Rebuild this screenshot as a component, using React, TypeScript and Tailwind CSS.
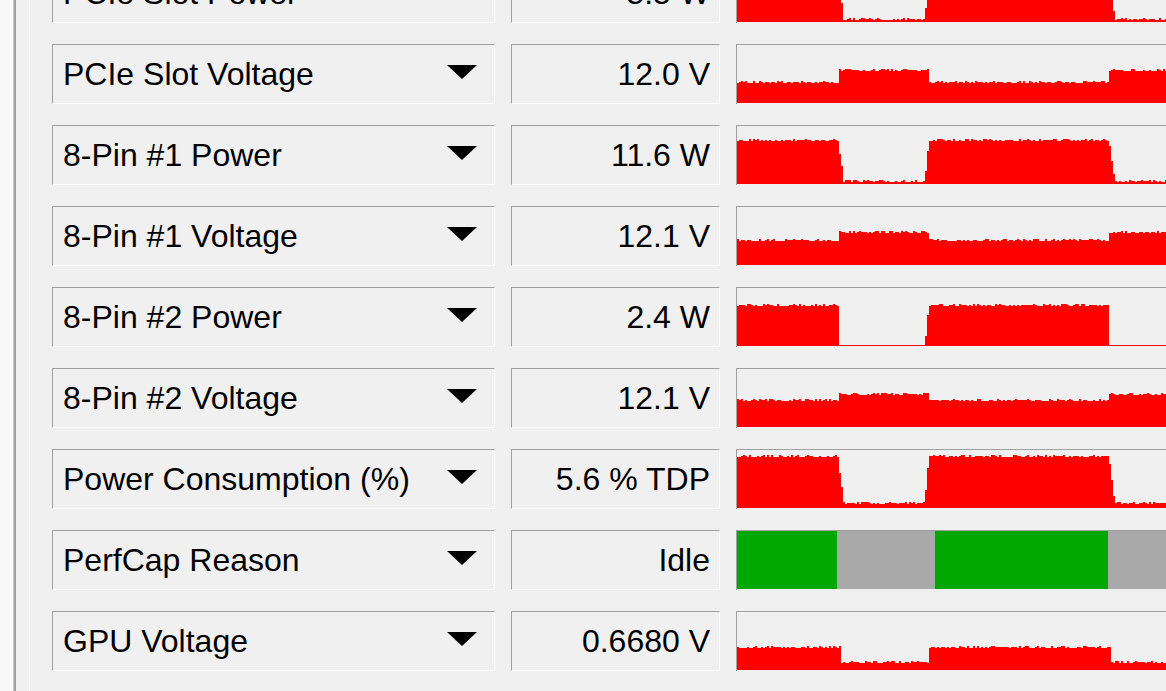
import React from "react";

type Key = [number, number];

interface SensorRow {
  label: string;
  value: string;
  keys?: Key[];
  perfcap?: boolean;
}

const GRAPH_W = 440;
const GRAPH_H = 58;

// deterministic noise so the picture is stable between runs
function noise(seed: number, i: number) {
  const s = Math.sin(seed * 97.13 + i * 12.9898) * 43758.5453;
  return s - Math.floor(s);
}

function levelAt(keys: Key[], x: number) {
  if (x <= keys[0][0]) return keys[0][1];
  for (let i = 1; i < keys.length; i++) {
    const [x0, y0] = keys[i - 1];
    const [x1, y1] = keys[i];
    if (x <= x1) {
      if (x1 === x0) return y1;
      return y0 + ((y1 - y0) * (x - x0)) / (x1 - x0);
    }
  }
  return keys[keys.length - 1][1];
}

function buildPath(keys: Key[], seed: number) {
  const pts: string[] = [`M0,${GRAPH_H}`];
  for (let x = 0; x <= GRAPH_W; x += 2) {
    const base = levelAt(keys, x);
    const n = noise(seed, x);
    const y = base < GRAPH_H - 2 ? base + (n > 0.6 ? 1 : n < 0.2 ? -1 : 0) : base;
    pts.push(`L${x},${y.toFixed(0)}`);
    pts.push(`L${x + 2},${y.toFixed(0)}`);
  }
  pts.push(`L${GRAPH_W},${GRAPH_H}Z`);
  return pts.join(" ");
}

// power style: high / low with a short slope on the way down
function powerKeys(hi: number, lo: number, slope = 6): Key[] {
  return [
    [0, hi],
    [100, hi],
    [100 + slope, lo],
    [187, lo],
    [191, hi],
    [371, hi],
    [371 + slope, lo],
    [GRAPH_W, lo],
  ];
}

// voltage style: steps up while the power is low
function voltKeys(lo: number, hi: number, a = 100, b = 191, c = 371): Key[] {
  return [
    [0, lo],
    [a, lo],
    [a, hi],
    [b, hi],
    [b, lo],
    [c, lo],
    [c, hi],
    [GRAPH_W, hi],
  ];
}

const rows: SensorRow[] = [
  { label: "PCIe Slot Power", value: "5.5 W", keys: powerKeys(8, 55) },
  { label: "PCIe Slot Voltage", value: "12.0 V", keys: voltKeys(37, 25) },
  { label: "8-Pin #1 Power", value: "11.6 W", keys: powerKeys(14, 55) },
  { label: "8-Pin #1 Voltage", value: "12.1 V", keys: voltKeys(33, 25) },
  { label: "8-Pin #2 Power", value: "2.4 W", keys: powerKeys(17, 57, 1) },
  { label: "8-Pin #2 Voltage", value: "12.1 V", keys: voltKeys(31, 25) },
  { label: "Power Consumption (%)", value: "5.6 % TDP", keys: powerKeys(6, 53) },
  { label: "PerfCap Reason", value: "Idle", perfcap: true },
  {
    label: "GPU Voltage",
    value: "0.6680 V",
    keys: [
      [0, 35],
      [102, 35],
      [102, 50],
      [191, 50],
      [191, 35],
      [372, 35],
      [372, 50],
      [GRAPH_W, 50],
    ],
  },
];

const sunken =
  "border border-t-[#a0a0a0] border-l-[#a0a0a0] border-r-white border-b-white";

function Graph({ row, seed }: { row: SensorRow; seed: number }) {
  if (row.perfcap) {
    return (
      <svg width={GRAPH_W} height={GRAPH_H} shapeRendering="crispEdges" className="block">
        <rect x={0} y={0} width={100} height={GRAPH_H} fill="#00a800" />
        <rect x={100} y={0} width={98} height={GRAPH_H} fill="#a9a9a9" />
        <rect x={198} y={0} width={173} height={GRAPH_H} fill="#00a800" />
        <rect x={371} y={0} width={GRAPH_W - 371} height={GRAPH_H} fill="#a9a9a9" />
      </svg>
    );
  }
  return (
    <svg width={GRAPH_W} height={GRAPH_H} shapeRendering="crispEdges" className="block">
      <path d={buildPath(row.keys ?? [], seed)} fill="#ff0000" />
    </svg>
  );
}

function Row({ row, seed }: { row: SensorRow; seed: number }) {
  return (
    <div className="flex h-[60px] shrink-0">
      <div className={`flex w-[443px] items-center justify-between pl-[10px] pr-[17px] ${sunken}`}>
        <span className="whitespace-nowrap">{row.label}</span>
        <svg width="30" height="14" viewBox="0 0 30 14" className="mb-[5px]">
          <polygon points="0,0 30,0 15,14" fill="#000" />
        </svg>
      </div>
      <div className={`ml-4 flex w-[209px] items-center justify-end pr-[9px] ${sunken}`}>
        <span className="whitespace-nowrap">{row.value}</span>
      </div>
      <div className="ml-4 flex-1 overflow-hidden border-t border-l border-[#a0a0a0]">
        <Graph row={row} seed={seed} />
      </div>
    </div>
  );
}

export default function App() {
  return (
    <div
      className="flex h-[691px] w-[1166px] overflow-hidden bg-[#f0f0f0] text-[32px] text-black"
      style={{ fontFamily: '"Liberation Sans", Arial, sans-serif' }}
    >
      <div className="w-[13px] shrink-0 bg-[#f8f8f8]" />
      <div className="w-px shrink-0 bg-[#c8c8c8]" />
      <div className="w-[2px] shrink-0 bg-[#a0a0a0]" />
      <div className="w-[13px] shrink-0" />
      <div className="w-px shrink-0 bg-white" />
      <div className="w-[22px] shrink-0" />
      <div className="-mt-[37px] flex flex-1 flex-col gap-[21px]">
        {rows.map((row, i) => (
          <Row key={row.label} row={row} seed={i + 1} />
        ))}
      </div>
    </div>
  );
}
